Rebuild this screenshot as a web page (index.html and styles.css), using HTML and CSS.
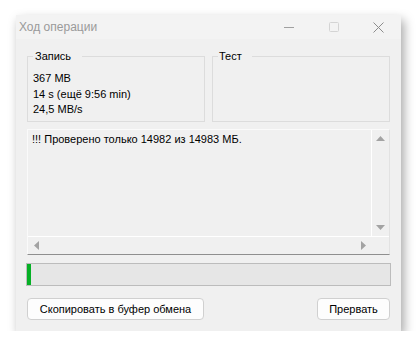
FILE: index.html
```html
<!DOCTYPE html>
<html lang="ru">
<head>
    <meta charset="UTF-8">
    <title>Ход операции</title>
    <link rel="stylesheet" href="styles.css">
</head>
<body>
    <div class="window">
        <div class="titlebar">
            <span class="title">Ход операции</span>
            <div class="controls">
                <span class="ctl">
                    <svg width="10" height="10" viewBox="0 0 10 10"><path d="M0 5.5h10" stroke="#a0a0a0" stroke-width="1"/></svg>
                </span>
                <span class="ctl">
                    <svg width="10" height="10" viewBox="0 0 10 10"><rect x="0.5" y="0.5" width="9" height="9" rx="1" fill="none" stroke="#d4d4d4"/></svg>
                </span>
                <span class="ctl">
                    <svg width="11" height="11" viewBox="0 0 11 11"><path d="M0.5 0.5L10.5 10.5M10.5 0.5L0.5 10.5" stroke="#8c8c8c" stroke-width="1"/></svg>
                </span>
            </div>
        </div>

        <div class="content">
            <div class="groups">
                <fieldset class="group">
                    <legend>Запись</legend>
                    <div class="line">367 MB</div>
                    <div class="line">14 s (ещё 9:56 min)</div>
                    <div class="line">24,5 MB/s</div>
                </fieldset>
                <fieldset class="group group-test">
                    <legend>Тест</legend>
                </fieldset>
            </div>

            <div class="memo">
                <div class="memo-text">!!! Проверено только 14982 из 14983 МБ.</div>
                <div class="vscroll">
                    <svg width="9" height="5" viewBox="0 0 9 5"><path d="M4.5 0L9 5H0z" fill="#a3a3a3"/></svg>
                    <svg width="9" height="5" viewBox="0 0 9 5"><path d="M0 0h9L4.5 5z" fill="#a3a3a3"/></svg>
                </div>
                <div class="hscroll">
                    <svg width="5" height="9" viewBox="0 0 5 9"><path d="M5 0v9L0 4.5z" fill="#a3a3a3"/></svg>
                    <svg width="5" height="9" viewBox="0 0 5 9"><path d="M0 0v9L5 4.5z" fill="#a3a3a3"/></svg>
                </div>
                <div class="corner"></div>
            </div>

            <div class="progress">
                <div class="progress-fill" style="width: 4px"></div>
            </div>

            <div class="buttons">
                <button class="btn btn-copy">Скопировать в буфер обмена</button>
                <button class="btn btn-stop">Прервать</button>
            </div>
        </div>
    </div>
</body>
</html>
```

FILE: styles.css
```css
body {
    margin: 0;
    background: #ffffff;
    font-family: "Liberation Sans", Arial, sans-serif;
    font-size: 11px;
    color: #000000;
}

.window {
    margin: 15px 0 0 16px;
    width: 385px;
    height: 316px;
    background: #f0f0f0;
    box-shadow: 3px 5px 10px rgba(0, 0, 0, 0.35);
    display: flex;
    flex-direction: column;
}

.titlebar {
    height: 24px;
    background: #f3f3f3;
    display: flex;
    align-items: center;
    justify-content: space-between;
}

.title {
    padding-left: 3px;
    font-size: 12px;
    color: #9a9a9a;
}

.controls {
    display: flex;
    height: 100%;
}

.ctl {
    width: 45px;
    display: flex;
    align-items: center;
    justify-content: center;
}

.content {
    flex: 1;
    padding: 10px 11px 0 11px;
    display: flex;
    flex-direction: column;
}

/* group boxes */
.groups {
    display: grid;
    grid-template-columns: 178px 178px;
    gap: 7px;
}

.group {
    margin: 0;
    height: 73px;
    box-sizing: border-box;
    border: 1px solid #dcdcdc;
    padding: 7px 5px 0 5px;
    line-height: 15.5px;
}

.group legend {
    padding: 0 11px 0 2px;
    line-height: 15px;
}

.group-test legend {
    padding: 0 10px 0 1px;
}

/* log box */
.memo {
    margin-top: 7px;
    height: 126px;
    box-sizing: border-box;
    border-top: 1px solid #fafafa;
    border-left: 1px solid #fafafa;
    border-right: 1px solid #e2e2e2;
    border-bottom: 1px solid #8f8f8f;
    display: grid;
    grid-template-columns: 1fr 17px;
    grid-template-rows: 1fr 17px;
}

.memo-text {
    padding: 2px 4px;
    line-height: 15px;
    border-right: 1px solid #ffffff;
    border-bottom: 1px solid #ffffff;
}

.vscroll {
    display: flex;
    flex-direction: column;
    align-items: center;
    justify-content: space-between;
    padding: 6px 0 6px 0;
    border-bottom: 1px solid #ffffff;
}

.hscroll {
    display: flex;
    align-items: center;
    justify-content: space-between;
    padding: 0 6px;
}

.progress {
    margin: 8px -1px 0 -1px;
    height: 23px;
    box-sizing: border-box;
    border: 1px solid #bcbcbc;
    background: #e6e6e6;
    display: flex;
}

.progress-fill {
    background: #06b025;
}

.buttons {
    margin-top: 12px;
    display: flex;
    justify-content: space-between;
}

.btn {
    height: 22px;
    box-sizing: border-box;
    background: #fdfdfd;
    border: 1px solid #d0d0d0;
    border-radius: 4px;
    font-family: inherit;
    font-size: 11px;
    color: #000000;
    padding: 0;
}

.btn-copy {
    width: 177px;
}

.btn-stop {
    width: 73px;
}
```
